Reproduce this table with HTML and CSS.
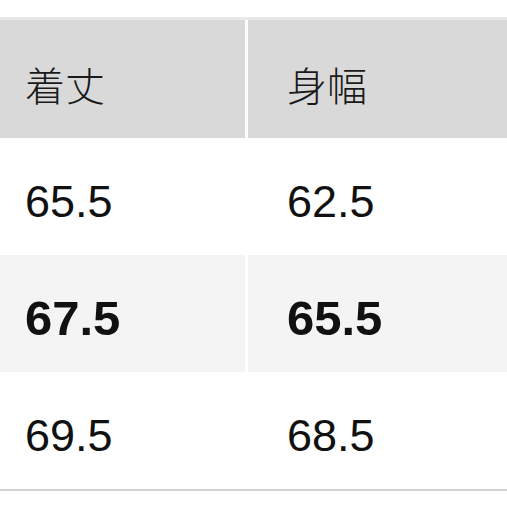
FILE: index.html
```html
<!DOCTYPE html>
<html lang="ja">
<head>
<meta charset="utf-8">
<link rel="stylesheet" href="styles.css">
</head>
<body>
<div class="table">
  <div class="row head">
    <div class="cell c1">着丈</div>
    <div class="cell c2">身幅</div>
  </div>
  <div class="row">
    <div class="cell c1">65.5</div>
    <div class="cell c2">62.5</div>
  </div>
  <div class="row alt bold">
    <div class="cell c1">67.5</div>
    <div class="cell c2">65.5</div>
  </div>
  <div class="row">
    <div class="cell c1">69.5</div>
    <div class="cell c2">68.5</div>
  </div>
</div>
</body>
</html>
```
FILE: styles.css
```css
html, body {
  margin: 0;
  padding: 0;
  background: #ffffff;
}
body {
  width: 507px;
  height: 507px;
  overflow: hidden;
  font-family: "Liberation Sans", "Noto Sans CJK JP", sans-serif;
  color: #111111;
}
.table {
  margin-top: 17px;
  border-top: 3px solid #e9e9e9;
  border-bottom: 2px solid #d2d2d2;
}
.row {
  display: grid;
  grid-template-columns: 245px 1fr;
  column-gap: 3px;
  height: 117px;
}
.row.head {
  height: 118px;
}
.cell {
  display: flex;
  align-items: center;
  padding-top: 10px;
  box-sizing: border-box;
  font-size: 45px;
  line-height: 1;
}
.c1 { padding-left: 25px; }
.c2 { padding-left: 39px; }
.head .cell {
  background: #d9d9d9;
  font-family: "Noto Sans CJK JP", sans-serif;
  font-size: 40px;
  font-weight: 300;
  color: #1a1a1a;
}
.alt .cell {
  background: #f4f4f4;
}
.bold .cell {
  font-weight: bold;
  font-size: 49px;
}
```
